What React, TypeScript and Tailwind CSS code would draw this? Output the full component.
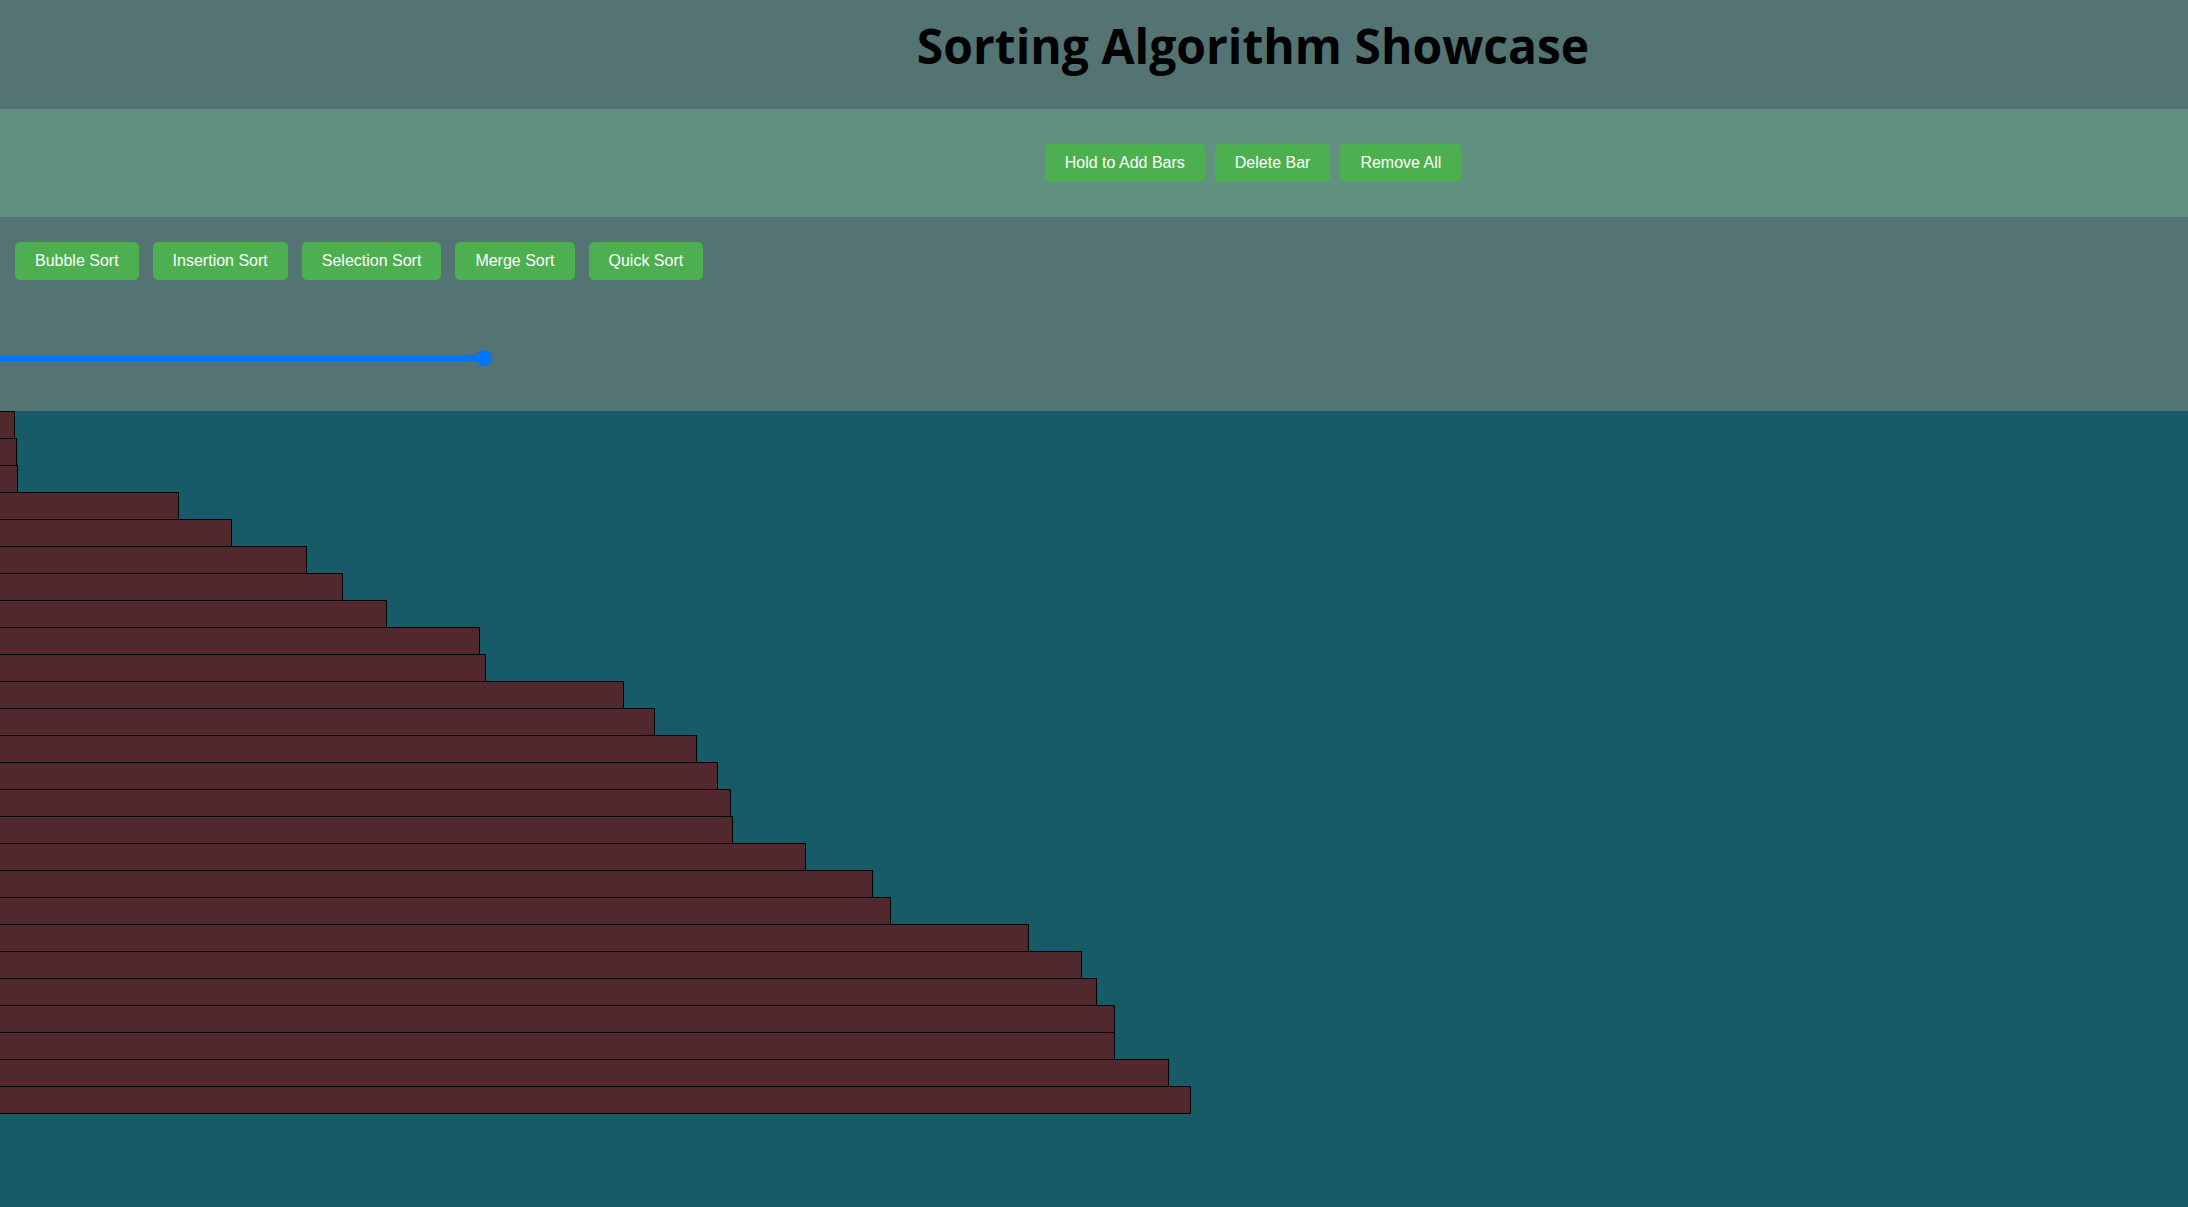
const bars = [
  15, 17, 18, 179, 232, 307, 343, 387, 480, 486, 624, 655, 697, 718, 731, 733,
  806, 873, 891, 1029, 1082, 1097, 1115, 1115, 1169, 1191,
];

const controls = ['Hold to Add Bars', 'Delete Bar', 'Remove All'];
const sorts = ['Bubble Sort', 'Insertion Sort', 'Selection Sort', 'Merge Sort', 'Quick Sort'];

function GreenButton({ label }: { label: string }) {
  return (
    <button className="h-[38px] shrink-0 whitespace-nowrap rounded-[5px] bg-[#4caf50] px-5 text-[16px] leading-[18px] text-white">
      {label}
    </button>
  );
}

export default function App() {
  return (
    <div className="min-h-screen w-screen overflow-hidden bg-[#165b67] font-['Liberation_Sans',Arial,sans-serif]">
      <div className="w-[2506px]">
        <header className="h-[109px] bg-[#537473] pt-[22px] text-center">
          <h1 className="font-['Open_Sans','Noto_Sans',sans-serif] text-[48px] font-bold leading-none text-black">
            Sorting Algorithm Showcase
          </h1>
        </header>

        <div className="flex justify-center gap-[10px] bg-[#63917f] py-[35px]">
          {controls.map((c) => (
            <GreenButton key={c} label={c} />
          ))}
        </div>

        <div className="h-[194px] bg-[#537473] pt-[25px]">
          <div className="flex gap-[14px] pl-[15px]">
            {sorts.map((s) => (
              <GreenButton key={s} label={s} />
            ))}
          </div>
          <div className="mt-[70px] flex w-[492px] items-center">
            <div className="h-[6px] flex-1 bg-[#0075ff]" />
            <div className="-ml-[8px] h-[16px] w-[16px] rounded-full bg-[#0075ff]" />
          </div>
        </div>
      </div>

      <div className="flex flex-col items-start">
        {bars.map((w, i) => (
          <div
            key={i}
            className="-mb-px h-[28px] border border-l-0 border-black bg-[#52282f]"
            style={{ width: w }}
          />
        ))}
      </div>
    </div>
  );
}
